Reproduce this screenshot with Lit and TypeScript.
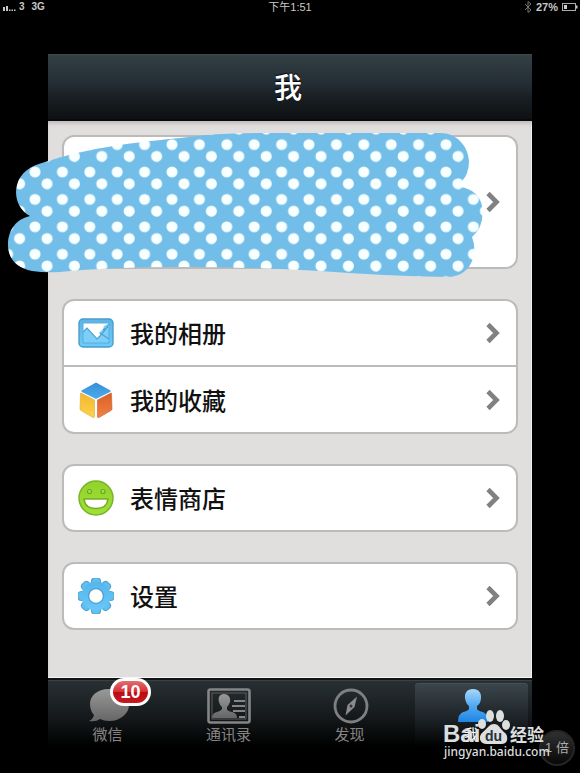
import { LitElement, html, css, svg, TemplateResult } from "lit";
import { customElement } from "lit/decorators.js";
import { classMap } from "lit/directives/class-map.js";

interface Row { label: string; icon: TemplateResult; }
interface Tab { label: string; icon: TemplateResult; badge?: number; active?: boolean; }

const albumIcon = html`<svg class="icon" viewBox="0 0 36 36" aria-hidden="true">
  <defs>
    <linearGradient id="sky" x1="0" y1="0" x2="0" y2="1"><stop offset="0" stop-color="#5db4e4"/><stop offset="1" stop-color="#6acbfc"/></linearGradient>
  </defs>
  <rect x="1" y="4" width="34" height="28" rx="4" fill="url(#sky)" stroke="#4a9dcc" stroke-width="1.400"/>
  <path d="M5 8H31V28H5Z" fill="#fff"/>
  <path d="M5 17L9 13L19 24L23 20L21 18L25 14L26 11L30 9L31 13V28H5Z" fill="#7dcffa"/>
  <path d="M5 17L9 13L19 24L22 21L27 15L31 9M22 18L31 24M25 15L30 12" fill="none" stroke="#4da0cf" stroke-width="1.200"/>
  <path d="M5 8H31V28H5Z" fill="none" stroke="#58aeda"/>
</svg>`;

const cubeIcon = html`<svg class="icon" viewBox="0 0 36 36" aria-hidden="true">
  <defs>
    <linearGradient id="top" x1="0" y1="0" x2="0" y2="1"><stop offset="0" stop-color="#3590d6"/><stop offset="1" stop-color="#4dacec"/></linearGradient>
    <linearGradient id="left" x1="0" y1="0" x2="0" y2="1"><stop offset="0" stop-color="#f3b62d"/><stop offset="1" stop-color="#fbd34a"/></linearGradient>
    <linearGradient id="right" x1="0" y1="0" x2="0" y2="1"><stop offset="0" stop-color="#da6025"/><stop offset="1" stop-color="#f28147"/></linearGradient>
  </defs>
  <path d="M18 .5L32.500 8.500Q33 9 32 10L18 17L4 10Q3 9 3.500 8.500Z" fill="url(#top)"/>
  <path d="M2.500 11.500Q2 11 3 11L16.500 18V35Q16 36 15 35.500L3 28.500Q2 28 2 27Z" fill="url(#left)" stroke="#dfa83b" stroke-width=".6"/>
  <path d="M33.500 11.500Q34 11 33 11L19.500 18V35Q20 36 21 35.500L33 28.500Q34 28 34 27Z" fill="url(#right)" stroke="#c8602f" stroke-width=".6"/>
</svg>`;

const smileIcon = html`<svg class="icon" viewBox="0 0 36 36" aria-hidden="true">
  <defs><linearGradient id="lime" x1="0" y1="0" x2="0" y2="1"><stop offset="0" stop-color="#92d32c"/><stop offset="1" stop-color="#a0e034"/></linearGradient></defs>
  <circle cx="18" cy="18" r="17" fill="url(#lime)" stroke="#79b32e" stroke-width="1.500"/>
  <circle cx="11.500" cy="11.500" r="2" fill="#a9e34a" stroke="#6ea527" stroke-width="1.200"/>
  <circle cx="25" cy="11.500" r="2" fill="#a9e34a" stroke="#6ea527" stroke-width="1.200"/>
  <path d="M6 19H30Q29 28.500 18 28.500T6 19Z" fill="#fff" stroke="#75ad2b" stroke-width="1.600" stroke-linejoin="round"/>
</svg>`;

const gearIcon = html`<svg class="icon" viewBox="0 0 36 36" aria-hidden="true">
  <defs><linearGradient id="cog" x1="0" y1="0" x2="0" y2="1"><stop offset="0" stop-color="#55b6ea"/><stop offset="1" stop-color="#68c8fb"/></linearGradient></defs>
  <g fill="#60bff3" stroke="#58a5d0" stroke-width="1.200">
    ${[0, 45, 90, 135, 180, 225, 270, 315].map(a => svg`<rect x="13.500" y="0" width="9" height="12" rx="3.500" transform="rotate(${a} 18 18)"/>`)}
  </g>
  <circle cx="18" cy="18" r="14.500" fill="url(#cog)"/>
  <circle cx="18" cy="18" r="7.500" fill="#fff" stroke="#58a5d0" stroke-width="1.500"/>
</svg>`;

const greyFill = svg`<defs><linearGradient id="grey" x1="0" y1="0" x2="0" y2="1"><stop offset="0" stop-color="#999"/><stop offset="1" stop-color="#666"/></linearGradient></defs>`;

const chatIcon = html`<svg class="tab-icon" viewBox="0 0 44 38" aria-hidden="true">${greyFill}
  <path d="M23 3C11 3 4 10 4 18C4 23 6 27 8 29Q7 33 3 35Q10 36 14 33Q18 35 23 35C35 35 43 27 43 19S35 3 23 3Z" fill="url(#grey)"/></svg>`;
const contactsIcon = html`<svg class="tab-icon" viewBox="0 0 44 38" aria-hidden="true">${greyFill}
  <rect x="1.500" y="3.500" width="41" height="33" rx="2" fill="none" stroke="#858585" stroke-width="2.600"/>
  <rect x="5" y="7" width="34" height="26" fill="none" stroke="#5c5f60"/>
  <path d="M17 8C12 8 11 12 12 16Q13 20 15 21V23Q14 25 10 26Q5 27 5 32H30Q30 27 25 26Q20 25 20 23V21Q22 19 23 16C24 11 21 8 17 8Z" fill="url(#grey)"/>
  <path d="M27 15H38M25 20H38M26 25H38M32 31H38" stroke="#858585" stroke-width="2"/></svg>`;
const compassIcon = html`<svg class="tab-icon" viewBox="0 0 44 38" aria-hidden="true">${greyFill}
  <circle cx="23" cy="20" r="16" fill="none" stroke="#7f7f7f" stroke-width="2.800"/>
  <path d="M29 10.500L26.500 21L17.500 29.500L19.500 19Z" fill="#8b8b8b"/><circle cx="23" cy="20" r="1.500" fill="#333"/></svg>`;
const meIcon = html`<svg class="tab-icon" viewBox="0 0 44 38" aria-hidden="true">
  <defs><linearGradient id="blue" x1="0" y1="0" x2="0" y2="1"><stop offset="0" stop-color="#a8d8fb"/><stop offset=".5" stop-color="#51aaf3"/><stop offset="1" stop-color="#1d85e4"/></linearGradient></defs>
  <path d="M23 3C17 3 14.500 7 15 12Q15.500 17 19 20V23Q18 25 13 26Q8 28 8 36H38Q38 28 33 26Q28 25 27 23V20Q31 17 31 12C31.500 7 29 3 23 3Z" fill="url(#blue)"/></svg>`;

const chevron = html`<svg class="chevron" viewBox="0 0 14 22" aria-hidden="true"><path d="M2 2.500L10.500 11L2 19.500" fill="none" stroke="#818181" stroke-width="4.600"/></svg>`;

@customElement("app-root")
export class AppRoot extends LitElement {
  static styles = css`
    :host { display: block; position: relative; min-height: 100vh; overflow: hidden; background: #000;
      font-family: "Liberation Sans", "Noto Sans CJK SC", sans-serif; }
    * { box-sizing: border-box; }
    button { font: inherit; border: 0; padding: 0; background: none; cursor: pointer; }
    .status { display: grid; grid-template-columns: 1fr auto 1fr; align-items: center; height: 14px; margin-bottom: 40px;
      padding: 0 2px; color: #c8c8c8; font-size: 11px; line-height: 14px; }
    .side { display: flex; align-items: center; gap: 3px; font-size: 10px; font-weight: 700; }
    .side.end { justify-content: flex-end; gap: 4px; font-size: 11px; }
    .signal { width: 14px; height: 8px; }
    .carrier { margin-right: 4px; }
    .bt { width: 8px; height: 12px; }
    .battery { width: 16px; height: 8px; }
    .phone { margin: 0 48px; }
    .header { display: flex; align-items: center; justify-content: center; height: 67px; padding: 4px 4px 0 0;
      background: linear-gradient(#334044, #242d34 45%, #171d21 70%, #0e1113); border-top: 1px solid #3c494d; border-bottom: 2px solid #0a0a0b; }
    h1 { margin: 0; color: #fff; font-size: 28px; line-height: 40px; font-weight: 500; text-shadow: 0 -1px 1px #000; }
    .content { display: flex; flex-direction: column; gap: 30px; padding: 14px 14px 48px; background: #e0dfde;
      box-shadow: inset 0 4px 4px -2px #b9b4b5, inset -1px -1px #f6f6f6; }
    .card { position: relative; border: 2px solid #bcbbba; border-radius: 12px; background: #fff; }
    .row { display: flex; align-items: center; width: 100%; height: 64px; padding: 0 16px 0 14px; text-align: left; color: #111; font-size: 24px; line-height: 32px; font-weight: 500; }
    .row + .row { height: 67px; border-top: 2px solid #bcbbba; }
    .profile { height: 130px; justify-content: flex-end; }
    .icon { width: 36px; height: 36px; flex: none; }
    .label { flex: 1; margin-left: 16px; padding-top: 4px; }
    .chevron { width: 14px; height: 22px; flex: none; }
    .scribble { position: absolute; left: -64px; top: -8px; width: 492px; height: 152px; pointer-events: none; }
    .tabs { display: grid; grid-template-columns: repeat(4, 1fr); height: 76px; background: linear-gradient(#293134, #15191b 50%, #000 90%); border-top: 2px solid #101314; box-shadow: inset 0 1px #3a4245; }
    .tab { position: relative; display: flex; flex-direction: column; align-items: center; padding: 6px 2px 0 0; color: #858585; font-size: 15px; line-height: 20px; }
    .tab.active { margin: 3px 4px 0; padding: 3px 0 0; color: #fff; border-radius: 4px 4px 0 0; background: linear-gradient(#3b464c, #1d2327 50%, #000 90%); box-shadow: inset 0 1px #465157; }
    .tab-icon { width: 44px; height: 38px; flex: none; }
    .tab-label { margin-top: 1px; }
    .badge { position: absolute; left: 62px; top: -2px; min-width: 41px; height: 28px; border: 3px solid #fff; border-radius: 14px; color: #fff; font-size: 18px; line-height: 22px; font-weight: 700; text-align: center;
      background: linear-gradient(#e36d70, #d63036 48%, #bd0b13 52%, #c81820); }
    .zoom { position: absolute; right: 5px; bottom: 7px; width: 36px; height: 36px; border: 2px solid #252525; border-radius: 18px; color: #aaa; background: linear-gradient(#303030, #080808); font-size: 13px; line-height: 32px; white-space: nowrap; }
    .mark { position: absolute; right: 30px; bottom: 8px; width: 110px; height: 60px; pointer-events: none; }
    .mark-bold { font: 700 24px "Liberation Sans", sans-serif; }
    .mark-du { font: 700 14px "Liberation Sans", sans-serif; }
    .mark-cjk { font: 700 17px "Noto Sans CJK SC", sans-serif; }
    .mark-url { font: 500 12px "Noto Sans", sans-serif; }
  `;

  private groups: Row[][] = [
    [{ label: "我的相册", icon: albumIcon }, { label: "我的收藏", icon: cubeIcon }],
    [{ label: "表情商店", icon: smileIcon }],
    [{ label: "设置", icon: gearIcon }],
  ];

  private tabs: Tab[] = [
    { label: "微信", icon: chatIcon, badge: 10 },
    { label: "通讯录", icon: contactsIcon },
    { label: "发现", icon: compassIcon },
    { label: "我", icon: meIcon, active: true },
  ];

  render() {
    return html`
      <div class="status">
        <div class="side">
          <svg class="signal" viewBox="0 0 14 8" aria-hidden="true"><path d="M1 4H3V8H1ZM4 3H6V8H4ZM7 6.500H8.500V8H7ZM9.500 6.500H11V8H9.500ZM12 6.500H13.500V8H12Z" fill="#c8c8c8"/></svg>
          <span class="carrier">3</span><span>3G</span>
        </div>
        <span>下午1:51</span>
        <div class="side end">
          <svg class="bt" viewBox="0 0 8 12" aria-hidden="true"><path d="M1 3L7 9L4 11.500V.5L7 3L1 9" fill="none" stroke="#777"/></svg>
          <span>27%</span>
          <svg class="battery" viewBox="0 0 16 8" aria-hidden="true"><rect x=".5" y=".5" width="13" height="7" fill="none" stroke="#aaa"/><path d="M2 2H5V6H2ZM14 2.500H15.500V5.500H14Z" fill="#ccc"/></svg>
        </div>
      </div>
      <div class="phone">
        <header class="header"><h1>我</h1></header>
        <main class="content">
          <section class="card">
            <button class="row profile" aria-label="个人资料">${chevron}</button>
            <svg class="scribble" viewBox="0 129 492 152" aria-hidden="true">
              <defs>
                <pattern id="dots" x="21.300" y="158.300" width="27.400" height="27.400" patternUnits="userSpaceOnUse">
                  <rect width="27.400" height="27.400" fill="#72bee8"/>
                  <circle cx="13.700" cy="13.700" r="5.500" fill="#f8ffff"/>
                  <circle cx="25.700" cy="25.500" r="5.500" fill="#f8ffff"/><circle cx="-1.700" cy="25.500" r="5.500" fill="#f8ffff"/>
                  <circle cx="25.700" cy="-1.900" r="5.500" fill="#f8ffff"/><circle cx="-1.700" cy="-1.900" r="5.500" fill="#f8ffff"/>
                </pattern>
              </defs>
              <path d="M30 216C18 210 14 196 17 185C20 173 30 166 45 162C85 149 120 144 180 138Q215 133 260 133H440C457 133 468 146 469 161Q469 174 462 181L460 187C472 188 481 197 482 206Q485 226 472 237Q476 247 473 258C470 270 460 277 447 277Q385 276 320 271Q250 267 180 267T60 272Q45 273 32 271C17 268 8 259 8 245C8 229 17 219 30 216Z" fill="url(#dots)"/>
            </svg>
          </section>
          ${this.groups.map(rows => html`<section class="card">
            ${rows.map(r => html`<button class="row">${r.icon}<span class="label">${r.label}</span>${chevron}</button>`)}
          </section>`)}
        </main>
        <nav class="tabs">
          ${this.tabs.map(t => html`<button class=${classMap({ tab: true, active: !!t.active })}>
            ${t.icon}<span class="tab-label">${t.label}</span>
            ${t.badge ? html`<span class="badge">${t.badge}</span>` : null}
          </button>`)}
        </nav>
      </div>
      <button class="zoom">1 倍</button>
      <svg class="mark" viewBox="0 0 110 60" fill="#dcdedf">
        <text class="mark-bold" x="3" y="37">Bai</text>
        <g>
          <ellipse cx="42" cy="19" rx="4" ry="5"/><ellipse cx="50" cy="11" rx="4" ry="6"/><ellipse cx="60" cy="11" rx="4" ry="6"/><ellipse cx="66" cy="20" rx="4" ry="5"/>
          <path d="M54 19C49 19 47 24 43 27C38 30 39 39 46 39H62C69 39 68 30 65 28C60 24 59 19 54 19Z"/>
        </g>
        <text class="mark-du" x="45" y="36" fill="#273039">du</text>
        <text class="mark-cjk" x="70" y="36">经验</text>
        <text class="mark-url" x="4" y="51">jingyan.baidu.com</text>
      </svg>
    `;
  }
}
